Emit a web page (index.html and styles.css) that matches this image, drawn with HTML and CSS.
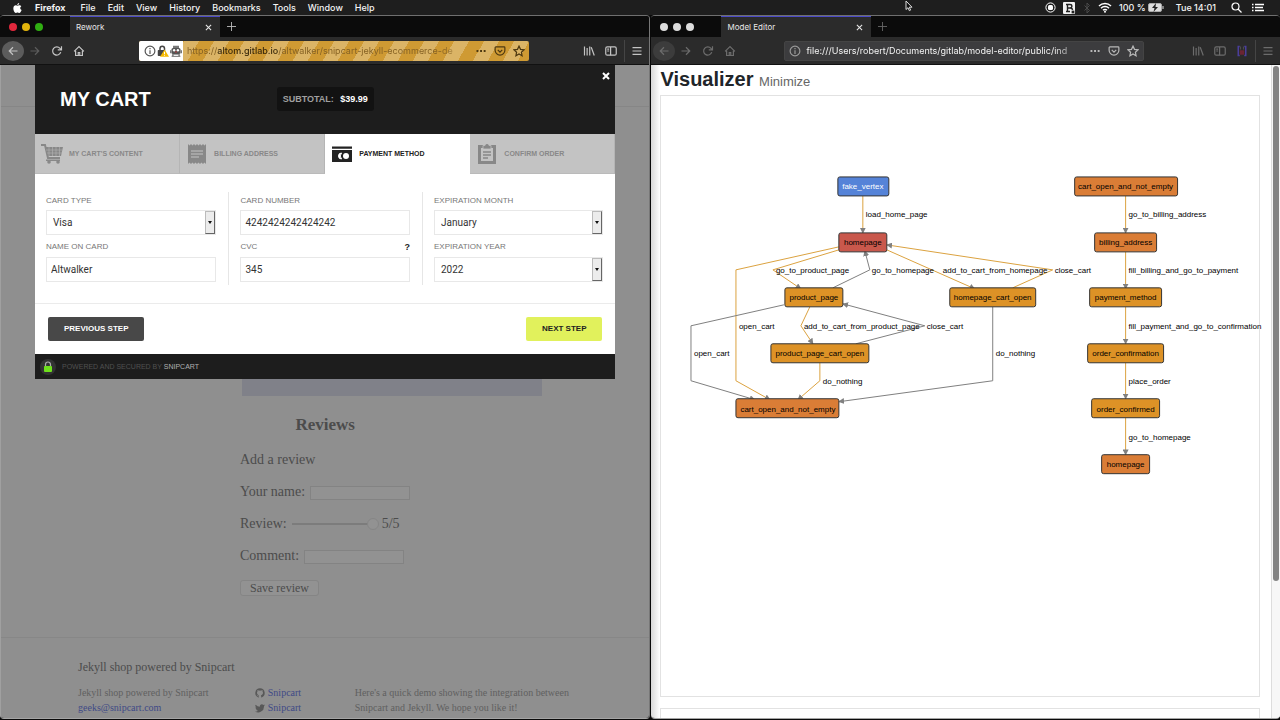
FILE: index.html
```html
<!DOCTYPE html>
<html lang="en">

<head>
    <meta charset="UTF-8">
    <meta name="viewport" content="width=device-width, initial-scale=1.0">
    <title>Altwalker Demo</title>
    <link rel="stylesheet" href="styles.css">
</head>
<body>

<!-- Shared icons -->
<svg class="sprite" aria-hidden="true">
    <symbol id="i-back" viewBox="0 0 16 16"><path d="M14 8H3M8 3L3 8l5 5"/></symbol>
    <symbol id="i-forward" viewBox="0 0 16 16"><path d="M2 8h11M8 3l5 5-5 5"/></symbol>
    <symbol id="i-reload" viewBox="0 0 16 16"><path d="M13 9.500A5.500 5.500 0 1 1 12 4.500L13.500 6M14 1.500V6.500H9"/></symbol>
    <symbol id="i-home" viewBox="0 0 16 16"><path d="M1.500 8.500L8 2l6.500 6.500M3.500 7.500V14h9V7.500M7 14v-4h2v4"/></symbol>
    <symbol id="i-info" viewBox="0 0 16 16"><circle cx="8" cy="8" r="6.500"/><path d="M8 7v5M8 4v1.500"/></symbol>
    <symbol id="i-dots" viewBox="0 0 16 16"><path d="M2 8h2.500M6.800 8h2.500M11.600 8h2.500" stroke-width="2.600"/></symbol>
    <symbol id="i-pocket" viewBox="0 0 16 16"><path d="M2.500 2.500h11a1 1 0 0 1 1 1V7a6.500 6.500 0 0 1-13 0V3.500a1 1 0 0 1 1-1zM5 6.500l3 3 3-3"/></symbol>
    <symbol id="i-star" viewBox="0 0 16 16"><path d="M8 1.500l2 4.300 4.700.6-3.500 3.200.9 4.700L8 12l-4.100 2.300.9-4.700L1.300 6.400 6 5.800z"/></symbol>
    <symbol id="i-library" viewBox="0 0 16 16"><path d="M2 2v12M5.500 4v10M9 2v12M11 3l4 11"/></symbol>
    <symbol id="i-sidebar" viewBox="0 0 16 16"><rect x="1" y="2.500" width="14" height="11" rx="2"/><path d="M7.500 2.500v11M3 5.500h2.500M3 8h2.500"/></symbol>
    <symbol id="i-menu" viewBox="0 0 16 16"><path d="M2 3.500h12M2 8h12M2 12.500h12"/></symbol>
</svg>

<header class="menubar">
    <svg class="apple" viewBox="0 0 16 18"><path d="M11 0c.2 2-1.500 3.900-3.400 3.900C7.300 2.100 9.200.2 11 0zM8 5c.9 0 1.900-1 3.500-1 1.400 0 2.600.8 3.300 1.800-2.900 1.700-2.400 5.700.6 6.900C14.500 15.300 13 18 11.200 18c-1.300 0-1.700-.8-3.200-.8s-2 .8-3.200.8C2.700 18 .5 13.600.5 10 .5 6.200 2.700 4.100 5 4.100 6.300 4.100 7.300 5 8 5z"/></svg>
    <nav class="menus">
        <b>Firefox</b>
        <span>File</span>
        <span>Edit</span>
        <span>View</span>
        <span>History</span>
        <span>Bookmarks</span>
        <span>Tools</span>
        <span>Window</span>
        <span>Help</span>
    </nav>
    <div class="status">
        <svg width="11" height="11" viewBox="0 0 11 11"><circle cx="5.500" cy="5.500" r="4.600" fill="none" stroke="#fff"/><rect x="3" y="3" width="5" height="5" rx="1.500" fill="#fff"/></svg>
        <svg width="13" height="12" viewBox="0 0 13 12"><rect width="12" height="12" rx="1" fill="#f2f2f2"/><path d="M3 2.500h4M3 9.500h4M4.500 2.500v7M4.500 6H7M7 2.500c2.500 0 2.500 3.500 0 3.500M7 6c2 0 2.500 1 2.500 2" fill="none" stroke="#222" stroke-width="1.400"/><circle cx="10" cy="10" r="1.800" fill="#222" stroke="#ccc" stroke-width=".6"/></svg>
        <svg width="8" height="12" viewBox="0 0 8 12"><path d="M1.500 3.500l5 5L4 11V1l2.500 2.500-5 5" fill="none" stroke="#4a4a4a"/></svg>
        <svg width="14" height="11" viewBox="0 0 14 11"><path d="M1 4a8.500 8.500 0 0 1 12 0M3 6.200a5.600 5.600 0 0 1 8 0M5 8.300a2.800 2.800 0 0 1 4 0" fill="none" stroke="#fff" stroke-width="1.500"/><circle cx="7" cy="9.700" r="1" fill="#fff"/></svg>
        <span class="battery">100 %
            <svg width="16" height="9" viewBox="0 0 16 9"><rect x=".5" y=".5" width="13" height="8" rx="1.500" fill="#ddd" stroke="#aaa"/><path d="M14.500 3h1v3h-1z" fill="#ddd"/><path d="M8 0L4 5h2.500L5.500 9 10 4H7.500z" fill="#222"/></svg>
        </span>
        <span class="clock">Tue 14:01</span>
        <svg class="search" width="11" height="11" viewBox="0 0 11 11"><circle cx="4.500" cy="4.500" r="3.500" fill="none" stroke="#fff" stroke-width="1.200"/><path d="M7 7l3.500 3.500" stroke="#fff" stroke-width="1.300"/></svg>
        <svg width="13" height="9" viewBox="0 0 13 9"><path d="M0 1.500h1.500M0 4.500h1.500M0 7.500h1.500M3 1.500h9M3 4.500h8M3 7.500h9" stroke="#fff" stroke-width="1.500"/></svg>
    </div>
</header>

<svg class="cursor" viewBox="0 0 8 12"><path d="M1 1v8.500l2-1.800 1.300 3 1.300-.6-1.300-2.900H7z"/></svg>

<main class="desktop">

    <!-- Shop window -->
    <section class="window shop-window">
        <div class="tabstrip">
            <div class="lights"><i class="red"></i><i class="yellow"></i><i class="green"></i></div>
            <div class="tab"><span>Rework</span><button type="button" aria-label="Close tab"><svg viewBox="0 0 8 8"><path d="M1 1l6 6M7 1L1 7"/></svg></button></div>
            <button type="button" class="new-tab" aria-label="New tab"><svg viewBox="0 0 10 10"><path d="M5 0v10M0 5h10"/></svg></button>
        </div>
        <div class="toolbar">
            <button type="button" class="tool back" aria-label="Back"><svg><use href="#i-back"/></svg></button>
            <button type="button" class="tool dim" aria-label="Forward"><svg><use href="#i-forward"/></svg></button>
            <button type="button" class="tool" aria-label="Reload"><svg><use href="#i-reload"/></svg></button>
            <button type="button" class="tool" aria-label="Home"><svg><use href="#i-home"/></svg></button>
            <div class="urlbar">
                <div class="identity">
                    <svg><use href="#i-info"/></svg>
                    <svg class="plain" viewBox="0 0 16 16"><path d="M4 7V4.500a3 3 0 0 1 6 0V7" fill="none" stroke="#444" stroke-width="2"/><rect x="1" y="6.500" width="10" height="8" rx="1" fill="#444"/><path d="M10 6l6 9.500H4z" fill="#f5b800"/><path d="M10 9v3M10 13v1.300" stroke="#fff" stroke-width="1.300"/></svg>
                    <svg class="plain" viewBox="0 0 16 16"><path d="M4 1h8v3H4z" fill="#777"/><rect x="2" y="4" width="12" height="8" rx="2" fill="#555"/><path d="M0 7h2v4H0zM14 7h2v4h-2z" fill="#777"/><circle cx="5.500" cy="7" r="1.600" fill="#fff"/><circle cx="10.500" cy="7" r="1.600" fill="#fff"/><path d="M7 9l1-1 1 1v1H7z" fill="#c33"/><path d="M3 12h10l1 4H2z" fill="#888"/><path d="M5 13h6v1.500H5z" fill="#eee"/></svg>
                </div>
                <div class="url">https://<b>altom.gitlab.io</b>/altwalker/snipcart-jekyll-ecommerce-de</div>
                <svg><use href="#i-dots"/></svg>
                <svg><use href="#i-pocket"/></svg>
                <svg><use href="#i-star"/></svg>
            </div>
            <button type="button" class="tool" aria-label="Library"><svg><use href="#i-library"/></svg></button>
            <button type="button" class="tool" aria-label="Sidebar"><svg><use href="#i-sidebar"/></svg></button>
            <span class="divider"></span>
            <button type="button" class="tool" aria-label="Menu"><svg><use href="#i-menu"/></svg></button>
        </div>

        <div class="shop">
            <div class="shop-header"></div>
            <div class="product"></div>

            <h2>Reviews</h2>
            <form class="review-form">
                <h3>Add a review</h3>
                <p><label for="reviewer">Your name:</label> <input type="text" id="reviewer"></p>
                <p><label for="rating">Review:</label> <input type="range" id="rating" min="0" max="5" value="5"><span>5/5</span></p>
                <p><label for="comment">Comment:</label> <input type="text" id="comment"></p>
                <button type="button">Save review</button>
            </form>

            <footer class="shop-footer">
                <h4>Jekyll shop powered by Snipcart</h4>
                <div class="footer-columns">
                    <div>Jekyll shop powered by Snipcart<br><a href="mailto:geeks@snipcart.com">geeks@snipcart.com</a></div>
                    <div>
                        <a href="#"><svg viewBox="0 0 16 16"><path d="M8 .5a7.500 7.500 0 0 0-2.400 14.600c.4.100.5-.2.5-.4v-1.400c-2.100.4-2.600-1-2.600-1-.3-.9-.8-1.100-.8-1.100-.7-.5.1-.5.1-.5.7.1 1.100.8 1.100.8.700 1.200 1.800.8 2.200.6.1-.5.3-.8.5-1C4.900 10.900 3.200 10.300 3.200 7.400c0-.8.3-1.500.8-2-.1-.2-.3-1 .1-2 0 0 .6-.2 2 .8a7 7 0 0 1 3.800 0c1.400-1 2-.8 2-.8.4 1 .2 1.800.1 2 .5.5.8 1.200.8 2 0 2.900-1.700 3.500-3.400 3.700.3.2.5.7.5 1.400v2.200c0 .2.100.5.500.4A7.500 7.500 0 0 0 8 .5z"/></svg>Snipcart</a><br>
                        <a href="#"><svg viewBox="0 0 16 16"><path d="M16 3.500c-.6.300-1.200.4-1.900.5.7-.4 1.200-1 1.400-1.800-.6.400-1.300.6-2.100.8a3.300 3.300 0 0 0-5.600 3A9.300 9.300 0 0 1 1.100 2.600a3.300 3.300 0 0 0 1 4.400c-.5 0-1-.2-1.500-.4 0 1.600 1.100 2.900 2.600 3.200-.5.100-1 .1-1.500.1.400 1.300 1.600 2.200 3.100 2.300A6.600 6.600 0 0 1 0 13.500 9.300 9.300 0 0 0 14.400 5.200c.6-.5 1.200-1 1.600-1.700z"/></svg>Snipcart</a>
                    </div>
                    <div>Here's a quick demo showing the integration between Snipcart and Jekyll. We hope you like it!</div>
                </div>
            </footer>

            <!-- Snipcart checkout -->
            <div class="cart" role="dialog" aria-label="My cart">
                <header class="cart-header">
                    <h1>MY CART</h1>
                    <p class="subtotal">SUBTOTAL: <b>$39.99</b></p>
                    <button type="button" class="cart-close" aria-label="Close cart"><svg viewBox="0 0 8 8"><path d="M1 1l6 6M7 1L1 7"/></svg></button>
                </header>
                <nav class="steps">
                    <a href="#"><svg viewBox="0 0 22 20"><path d="M0 1h4l3 13h12" fill="none" stroke="currentColor" stroke-width="2"/><path d="M4.500 3H22l-2 9H6.500z"/><path d="M8 3v9M11.500 3v9M15 3v9M18.500 3v9M5 6h16M6 9h15" stroke="#b4b4b4" stroke-width=".6"/><path d="M5 15.500h14v1.500H5z"/><circle cx="8" cy="18" r="1.800"/><circle cx="17" cy="18" r="1.800"/></svg>MY CART'S CONTENT</a>
                    <a href="#"><svg viewBox="0 0 22 20"><path d="M2 0l1.500 1.500L5 0l1.500 1.500L8 0l1.500 1.500L11 0l1.500 1.500L14 0l1.500 1.500L17 0l1.500 1.500L20 0v20l-1.500-1.500L17 20l-1.500-1.500L14 20l-1.500-1.500L11 20l-1.500-1.500L8 20l-1.500-1.500L5 20l-1.500-1.500L2 20z"/><path d="M5 7h12M5 10h12M5 13h8" stroke="#c3c3c3" stroke-width="1.200"/></svg>BILLING ADDRESS</a>
                    <a href="#" class="active"><svg viewBox="0 0 22 20"><path d="M1 2.500h20v2.200H1zM1 6h20v12H1z"/><circle cx="15" cy="12" r="3" fill="#fff"/><path d="M10.500 9a3 3 0 0 0 0 6 4.500 4.500 0 0 1 0-6z" fill="#fff" stroke="#fff"/></svg>PAYMENT METHOD</a>
                    <a href="#"><svg viewBox="0 0 22 20"><path d="M3.500 2.500h15v16h-15z" fill="none" stroke="currentColor" stroke-width="3"/><path d="M7 1.500h2a2 2 0 0 1 4 0h2V5H7z" stroke="#c3c3c3" stroke-width=".8"/><path d="M7 8h8M7 11h8M7 14h5" stroke="currentColor" stroke-width="1.500"/></svg>CONFIRM ORDER</a>
                </nav>
                <form class="payment">
                    <div class="fields">
                        <div class="column">
                            <label for="card-type">CARD TYPE</label>
                            <div class="select"><select id="card-type"><option>Visa</option></select><span class="arrow"></span></div>
                            <label for="card-name">NAME ON CARD</label>
                            <input type="text" id="card-name" value="Altwalker">
                        </div>
                        <div class="column">
                            <label for="card-number">CARD NUMBER</label>
                            <input type="text" id="card-number" value="4242424242424242">
                            <label for="cvc">CVC <b>?</b></label>
                            <input type="text" id="cvc" value="345">
                        </div>
                        <div class="column">
                            <label for="exp-month">EXPIRATION MONTH</label>
                            <div class="select"><select id="exp-month"><option>January</option></select><span class="arrow"></span></div>
                            <label for="exp-year">EXPIRATION YEAR</label>
                            <div class="select"><select id="exp-year"><option>2022</option></select><span class="arrow"></span></div>
                        </div>
                    </div>
                    <div class="actions">
                        <button type="button" class="previous">PREVIOUS STEP</button>
                        <button type="button" class="next">NEXT STEP</button>
                    </div>
                </form>
                <footer class="powered">
                    <svg viewBox="0 0 16 16"><circle cx="8" cy="8" r="8" fill="#333"/><path d="M5.500 8V5.500a2.500 2.500 0 0 1 5 0V8" fill="none" stroke="#aaa" stroke-width="1.200"/><rect x="4" y="7" width="8" height="6" rx="1" fill="#6fe01c"/></svg>
                    <span>POWERED AND SECURED BY <a href="#">SNIPCART</a></span>
                </footer>
            </div>
        </div>
    </section>

    <!-- Model editor window -->
    <section class="window editor-window">
        <div class="tabstrip">
            <div class="lights"><i></i><i></i><i></i></div>
            <div class="tab"><span>Model Editor</span><button type="button" aria-label="Close tab"><svg viewBox="0 0 8 8"><path d="M1 1l6 6M7 1L1 7"/></svg></button></div>
            <button type="button" class="new-tab" aria-label="New tab"><svg viewBox="0 0 10 10"><path d="M5 0v10M0 5h10"/></svg></button>
        </div>
        <div class="toolbar">
            <button type="button" class="tool back" aria-label="Back"><svg><use href="#i-back"/></svg></button>
            <button type="button" class="tool" aria-label="Forward"><svg><use href="#i-forward"/></svg></button>
            <button type="button" class="tool" aria-label="Reload"><svg><use href="#i-reload"/></svg></button>
            <button type="button" class="tool" aria-label="Home"><svg><use href="#i-home"/></svg></button>
            <div class="urlbar">
                <svg class="info"><use href="#i-info"/></svg>
                <div class="url">file:///Users/robert/Documents/gitlab/model-editor/public/ind</div>
                <svg><use href="#i-dots"/></svg>
                <svg><use href="#i-pocket"/></svg>
                <svg><use href="#i-star"/></svg>
            </div>
            <button type="button" class="tool" aria-label="Library"><svg><use href="#i-library"/></svg></button>
            <button type="button" class="tool" aria-label="Sidebar"><svg><use href="#i-sidebar"/></svg></button>
            <button type="button" class="tool" aria-label="Extension"><svg class="plain" viewBox="0 0 16 16"><path d="M5 2H3v12h2M11 2h2v12h-2" fill="none" stroke="#4a3f9c" stroke-width="2"/><rect x="5" y="7" width="6" height="6" fill="#6b2433"/><path d="M6 2v4M10 2v4" stroke="#4c4c4c" stroke-width="1.500"/></svg></button>
            <span class="divider"></span>
            <button type="button" class="tool" aria-label="Menu"><svg><use href="#i-menu"/></svg></button>
        </div>

        <div class="editor">
            <div class="editor-body">
                <h1>Visualizer <small>Minimize</small></h1>
                <div class="canvas">
                    <svg class="graph" viewBox="661 96 598 600">
                        <defs>
                            <marker id="arrow" viewBox="0 0 8 8" refX="7" refY="4" markerWidth="6" markerHeight="6" markerUnits="userSpaceOnUse" orient="auto"><path d="M0 0l8 4-8 4z" fill="#808080"/></marker>
                        </defs>
                        <g class="edges visited">
                            <path d="M863 196V233"/>
                            <path d="M839 247L736 270V381L770 400"/>
                            <path d="M839 250L773 270L801 289"/>
                            <path d="M887 250L975 289"/>
                            <path d="M1013 288L1053 270L887 245"/>
                            <path d="M810 307L801 326L813 344"/>
                            <path d="M820 363V381L798 400"/>
                            <path d="M1126 196V233"/>
                            <path d="M1126 252V289"/>
                            <path d="M1126 307V344"/>
                            <path d="M1126 363V399"/>
                            <path d="M1126 418V455"/>
                        </g>
                        <g class="edges">
                            <path d="M833 288L870 270L865 251"/>
                            <path d="M784 305L691 326V381L755 400"/>
                            <path d="M856 344L925 326L843 304"/>
                            <path d="M993 307V381L839 402"/>
                        </g>
                        <g class="nodes">
                            <rect class="start" x="838" y="177" width="51" height="19" rx="2"/>
                            <rect class="failed" x="839" y="233" width="48" height="19" rx="2"/>
                            <rect x="785" y="288" width="58" height="19" rx="2"/>
                            <rect x="950" y="288" width="86" height="19" rx="2"/>
                            <rect x="771" y="344" width="98" height="19" rx="2"/>
                            <rect class="shared" x="736" y="399" width="103" height="19" rx="2"/>
                            <rect class="shared" x="1075" y="177" width="103" height="19" rx="2"/>
                            <rect class="shared" x="1095" y="233" width="62" height="19" rx="2"/>
                            <rect x="1090" y="288" width="72" height="19" rx="2"/>
                            <rect x="1088" y="344" width="76" height="19" rx="2"/>
                            <rect x="1092" y="399" width="68" height="19" rx="2"/>
                            <rect class="shared" x="1102" y="455" width="48" height="19" rx="2"/>
                        </g>
                        <g class="names">
                            <text class="light" x="863" y="189">fake_vertex</text>
                            <text x="863" y="245">homepage</text>
                            <text x="814" y="300">product_page</text>
                            <text x="993" y="300">homepage_cart_open</text>
                            <text x="820" y="356">product_page_cart_open</text>
                            <text x="788" y="412">cart_open_and_not_empty</text>
                            <text x="1126" y="189">cart_open_and_not_empty</text>
                            <text x="1126" y="245">billing_address</text>
                            <text x="1126" y="300">payment_method</text>
                            <text x="1126" y="356">order_confirmation</text>
                            <text x="1126" y="412">order_confirmed</text>
                            <text x="1126" y="467">homepage</text>
                        </g>
                        <g class="labels">
                            <text x="866" y="217">load_home_page</text>
                            <text x="776" y="273">go_to_product_page</text>
                            <text x="872" y="273">go_to_homepage</text>
                            <text x="943" y="273">add_to_cart_from_homepage</text>
                            <text x="1055" y="273">close_cart</text>
                            <text x="739" y="329">open_cart</text>
                            <text x="804" y="329">add_to_cart_from_product_page</text>
                            <text x="927" y="329">close_cart</text>
                            <text x="694" y="356">open_cart</text>
                            <text x="996" y="356">do_nothing</text>
                            <text x="823" y="384">do_nothing</text>
                            <text x="1129" y="217">go_to_billing_address</text>
                            <text x="1129" y="273">fill_billing_and_go_to_payment</text>
                            <text x="1129" y="329">fill_payment_and_go_to_confirmation</text>
                            <text x="1129" y="384">place_order</text>
                            <text x="1129" y="440">go_to_homepage</text>
                        </g>
                    </svg>
                </div>
                <div class="panel"></div>
            </div>
            <div class="scrollbar"><div class="thumb"></div></div>
        </div>
    </section>
</main>

</body>
</html>
```
FILE: styles.css
```css
* {
    box-sizing: border-box;
}

body {
    margin: 0;
    height: 100vh;
    display: flex;
    flex-direction: column;
    overflow: hidden;
    background: #0a0a0a;
    font-family: Inter, sans-serif;
}

h1, h2, h3, h4, p {
    margin: 0;
}

button {
    padding: 0;
    border: none;
    background: none;
    font: inherit;
    color: inherit;
}

a {
    text-decoration: none;
}

svg {
    flex: none;
}

.sprite {
    display: none;
}

/* Menu bar */
.menubar {
    height: 15px;
    flex: none;
    display: flex;
    align-items: center;
    padding: 0 15px 0 13px;
    background: #1e1e1e;
    color: #f4f4f4;
    font-size: 9px;
    font-weight: 500;
    line-height: 15px;
}

.apple {
    width: 9px;
    height: 10px;
    margin-right: 13px;
    fill: #fff;
}

.menus {
    display: flex;
    gap: 12px;
}

.menus b {
    margin-right: 3px;
}

.status {
    margin-left: auto;
    display: flex;
    align-items: center;
    gap: 7px;
}

.battery {
    display: flex;
    align-items: center;
    gap: 2px;
}

.clock {
    margin: 0 8px 0 5px;
}

.search {
    margin-right: 3px;
}

.cursor {
    position: absolute;
    left: 905px;
    top: 0;
    width: 8px;
    height: 12px;
    fill: #111;
    stroke: #ddd;
}

/* Windows */
.desktop {
    flex: 1;
    min-height: 0;
    display: flex;
    gap: 1px;
    padding-bottom: 1px;
}

.window {
    min-width: 0;
    display: flex;
    flex-direction: column;
    overflow: hidden;
    border-top: 1px solid #6f6f6f;
    border-bottom: 1px solid #a5a5a5;
    border-radius: 4px;
    color: #e8e8e8;
}

.shop-window {
    flex: 650 1 0;
    border-right: 1px solid #777;
}

.editor-window {
    flex: 629 1 0;
}

.tabstrip {
    height: 21px;
    flex: none;
    display: flex;
    background: #0b0b0b;
    font-size: 8px;
}

.lights {
    width: 70px;
    display: flex;
    align-items: center;
    gap: 5px;
    padding-left: 9px;
}

.lights i {
    width: 8px;
    height: 8px;
    border-radius: 50%;
    background: #dcdcdc;
}

.lights .red {
    background: #e0283c;
}

.lights .yellow {
    background: #e2b40c;
}

.lights .green {
    background: #30ae12;
}

.tab {
    width: 150px;
    display: flex;
    align-items: center;
    justify-content: space-between;
    padding: 0 8px 0 6px;
    background: #2b2b2b;
    border-top: 1px solid #4b4bc8;
}

.tab button {
    display: flex;
}

.tab svg {
    width: 7px;
    height: 7px;
    stroke: #e8e8e8;
    stroke-width: 1.2;
}

.new-tab {
    width: 23px;
    display: flex;
    align-items: center;
    justify-content: center;
}

.new-tab svg {
    width: 9px;
    height: 9px;
    stroke: #bbb;
    stroke-width: 1;
}

.editor-window .new-tab svg {
    stroke: #666;
}

.toolbar {
    height: 28px;
    flex: none;
    display: flex;
    align-items: center;
    padding: 0 1px 0 2px;
    background: #2b2b2b;
    color: #c4c4c4;
    border-bottom: 1px solid #111;
}

.toolbar svg {
    width: 12px;
    height: 12px;
    fill: none;
    stroke: currentColor;
    stroke-width: 1.6;
}

.toolbar svg.plain {
    stroke: none;
}

.editor-window .toolbar {
    color: #6c6c6c;
}

.tool {
    width: 22px;
    height: 20px;
    display: flex;
    align-items: center;
    justify-content: center;
}

.tool.back {
    border-radius: 50%;
    background: #5c5c5c;
}

.editor-window .tool.back {
    background: #3c3c3c;
}

.tool.dim {
    color: #5c5c5c;
}

.divider {
    width: 1px;
    height: 22px;
    margin: 0 1px 0 2px;
    background: #454545;
}

.urlbar {
    flex: 1;
    min-width: 0;
    height: 20px;
    display: flex;
    align-items: center;
    gap: 7px;
    padding-right: 4px;
    border-radius: 2px;
    font-size: 9px;
}

.url {
    flex: 1;
    min-width: 0;
    overflow: hidden;
    white-space: nowrap;
}

.shop-window .urlbar {
    margin: 0 49px;
    background: repeating-linear-gradient(120deg, #cf9a33 0 13px, #dbb466 13px 26px);
    color: #4d3810;
}

.shop-window .url {
    margin: 0 0 0 -3px;
    color: #866224;
    -webkit-mask-image: linear-gradient(90deg, #000 90%, transparent);
    mask-image: linear-gradient(90deg, #000 90%, transparent);
}

.url b {
    font-weight: 500;
    color: #38290c;
}

.identity {
    height: 100%;
    display: flex;
    align-items: center;
    gap: 1px;
    padding: 0 1px 0 5px;
    background: #fff;
    border-radius: 2px 0 0 2px;
    color: #555;
}

.editor-window .urlbar {
    margin: 0 43px;
    background: #3c3c3e;
    border: 1px solid #444;
    color: #b8b8b8;
}

.editor-window .url {
    margin: 0 0 0 -2px;
    color: #f2f2f2;
    -webkit-mask-image: linear-gradient(90deg, #000 90%, transparent);
    mask-image: linear-gradient(90deg, #000 90%, transparent);
}

.info {
    margin-left: 4px;
    color: #999;
}

/* Shop page, dimmed behind the cart */
.shop {
    position: relative;
    flex: 1;
    min-height: 0;
    overflow: hidden;
    background: #8f8f8f;
    border-left: 1px solid #a0a0a0;
    color: #4c4c4c;
    font-family: "Liberation Serif", serif;
    font-size: 14px;
    line-height: 20px;
}

.shop-header {
    height: 42px;
    border-bottom: 1px solid #868686;
}

.product {
    width: 300px;
    height: 289px;
    margin-left: 241px;
    background: #808189;
}

.shop h2 {
    margin-top: 19px;
    text-align: center;
    font-size: 17px;
}

.review-form {
    margin: 15px 0 0 239px;
}

.review-form h3 {
    font-size: 14px;
    font-weight: normal;
}

.review-form p {
    display: flex;
    align-items: center;
    gap: 5px;
    margin-top: 12px;
}

.review-form input[type="text"] {
    width: 100px;
    height: 14px;
    margin-top: 2px;
    background: #929292;
    border: 1px solid #838383;
}

.review-form input[type="range"] {
    appearance: none;
    width: 87px;
    height: 12px;
    margin: 0 -2px 0 0;
    background: linear-gradient(#7c7c7c, #7c7c7c) left / 76px 2px no-repeat;
}

.review-form input[type="range"]::-webkit-slider-thumb {
    appearance: none;
    width: 12px;
    height: 12px;
    border: 1px solid #868686;
    border-radius: 50%;
    background: #929292;
}

.review-form button {
    height: 16px;
    margin-top: 14px;
    padding: 0 9px;
    display: block;
    background: #929292;
    border: 1px solid #858585;
    border-radius: 3px;
    font-size: 12px;
    line-height: 12px;
}

.shop-footer {
    margin-top: 41px;
    padding: 19px 76px 0 77px;
    border-top: 1px solid #878787;
}

.shop-footer h4 {
    font-size: 12px;
    font-weight: normal;
}

.footer-columns {
    display: grid;
    grid-template-columns: 177fr 100fr 219fr;
    margin-top: 8px;
    color: #606060;
    font-size: 10px;
    line-height: 15px;
}

.footer-columns a {
    color: #404a86;
}

.footer-columns svg {
    width: 10px;
    height: 10px;
    margin-right: 3px;
    vertical-align: -2px;
    fill: #585858;
}

/* Cart */
.cart {
    position: absolute;
    top: 0;
    left: 34px;
    right: 34px;
    background: #fff;
    font-family: "Liberation Sans", Arial, sans-serif;
    font-size: 8px;
    line-height: 12px;
}

.cart-header {
    height: 69px;
    display: grid;
    grid-template-columns: 1fr auto 1fr;
    align-items: center;
    padding: 0 5px 2px 25px;
    background: #1d1d1d;
    color: #fff;
}

.cart-header h1 {
    font-size: 20px;
    line-height: 24px;
}

.subtotal {
    height: 24px;
    margin-right: 20px;
    padding: 0 6px;
    background: #121212;
    border-radius: 3px;
    color: #a0a0a0;
    font-size: 9px;
    font-weight: bold;
    line-height: 24px;
}

.subtotal b {
    margin-left: 4px;
    color: #fff;
}

.cart-close {
    align-self: start;
    justify-self: end;
    margin-top: 7px;
}

.cart-close svg {
    width: 8px;
    height: 8px;
    stroke: #fff;
    stroke-width: 2;
}

.steps {
    display: grid;
    grid-template-columns: repeat(4, 1fr);
}

.steps a {
    height: 40px;
    display: flex;
    align-items: center;
    gap: 6px;
    padding-left: 6px;
    background: #c3c3c3;
    border-right: 1px solid #b5b5b5;
    border-bottom: 1px solid #bababa;
    color: #888;
    font-size: 7px;
    font-weight: bold;
}

.steps svg {
    width: 22px;
    height: 20px;
    fill: currentColor;
}

.steps .active {
    background: #fff;
    border-color: #fff;
    color: #222;
}

.fields {
    display: grid;
    grid-template-columns: repeat(3, 1fr);
    padding: 18px 0;
}

.column {
    display: grid;
    align-content: start;
    padding: 0 12px 3px 11px;
    border-left: 1px solid #e6e6e6;
}

.column:first-child {
    border-left: none;
}

.column label {
    height: 18px;
    display: flex;
    justify-content: space-between;
    color: #777;
    line-height: 17px;
}

.column label b {
    color: #222;
    font-size: 9px;
}

.column label:nth-of-type(2) {
    height: 22px;
    line-height: 24px;
}

.column input,
.select {
    width: 100%;
    height: 25px;
    background: #fff;
    border: 1px solid #e8e8e8;
    color: #333;
    font-family: Roboto, sans-serif;
    font-size: 10px;
}

.column input {
    padding: 0 4px;
}

.select {
    display: flex;
}

.select select {
    appearance: none;
    flex: 1;
    min-width: 0;
    padding: 0 6px;
    border: none;
    background: #fff;
    color: inherit;
    font: inherit;
}

.arrow {
    width: 10px;
    display: flex;
    align-items: center;
    justify-content: center;
    background: #ececec;
    border: 1px solid #bbb;
    border-right-color: #666;
    border-bottom-color: #666;
}

.arrow::after {
    content: "";
    border: 2px solid transparent;
    border-top: 3px solid #111;
    border-bottom: none;
}

.actions {
    display: flex;
    justify-content: space-between;
    padding: 13px;
    border-top: 1px solid #ebebeb;
}

.actions button {
    height: 24px;
    padding: 0 16px;
    border-radius: 2px;
    font-size: 8px;
    font-weight: bold;
}

.previous {
    background: #484848;
    color: #fff;
}

.actions .next {
    background: #e1f15c;
    color: #222;
}

.powered {
    height: 25px;
    display: flex;
    align-items: center;
    gap: 6px;
    padding-left: 5px;
    background: #1d1d1d;
    color: #505050;
    font-size: 7px;
}

.powered svg {
    width: 16px;
    height: 16px;
}

.powered a {
    color: #b0b0b0;
}

/* Model editor page */
.editor {
    flex: 1;
    min-height: 0;
    display: flex;
    overflow: hidden;
    background: linear-gradient(90deg, #d8d8d8, #fff 9px);
    color: #212529;
    font-family: "Liberation Sans", Arial, sans-serif;
}

.editor-body {
    flex: 1;
    min-width: 0;
    padding: 0 11px 0 9px;
}

.editor h1 {
    height: 30px;
    font-size: 20px;
    line-height: 28px;
}

.editor h1 small {
    color: #666;
    font-size: 13px;
    font-weight: normal;
}

.canvas {
    border: 1px solid #e2e2e2;
    background: #fff;
}

.graph {
    display: block;
    width: 100%;
    overflow: visible;
    font-size: 8px;
}

.edges {
    fill: none;
    stroke: #808080;
}

.edges path {
    marker-end: url(#arrow);
}

.edges.visited {
    stroke: #dba23f;
}

.nodes rect {
    fill: #dd9226;
    stroke: #333;
}

.nodes .start {
    fill: #5583d8;
}

.nodes .failed {
    fill: #c9584c;
}

.nodes .shared {
    fill: #da7d36;
}

.names {
    text-anchor: middle;
}

.names .light {
    fill: #fff;
}

.panel {
    height: 40px;
    margin-top: 11px;
    border: 1px solid #e2e2e2;
}

.scrollbar {
    width: 9px;
    padding: 1px 1px 0;
    background: #f7f7f7;
    border-left: 1px solid #ddd;
}

.thumb {
    height: 79%;
    border-radius: 4px;
    background: #848484;
}
```
